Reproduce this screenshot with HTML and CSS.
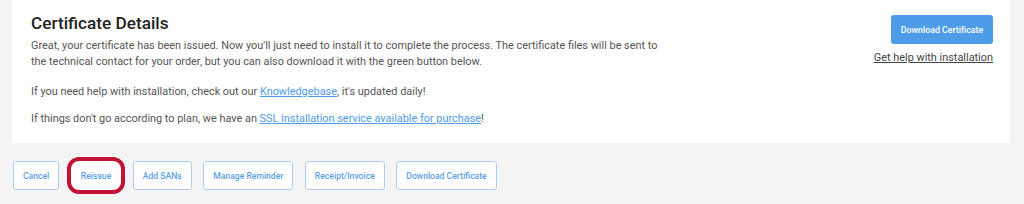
FILE: index.html
```html
<!DOCTYPE html>
<html>
<head>
<meta charset="utf-8">
<link rel="stylesheet" href="styles.css">
</head>
<body>
<div class="page">
  <section class="card">
    <div class="card-main">
      <h1 class="title">Certificate Details</h1>
      <p class="text text-lead">Great, your certificate has been issued. Now you'll just need to install it to complete the process. The certificate files will be sent to the technical contact for your order, but you can also download it with the green button below.</p>
      <p class="text">If you need help with installation, check out our <a class="link" href="#">Knowledgebase</a>, it's updated daily!</p>
      <p class="text">If things don't go according to plan, we have an <a class="link" href="#">SSL installation service available for purchase</a>!</p>
    </div>
    <div class="card-side">
      <a class="btn-primary" href="#">Download Certificate</a>
      <a class="help-link" href="#">Get help with installation</a>
    </div>
  </section>
  <div class="actions">
    <a class="btn" href="#">Cancel</a>
    <a class="btn btn-highlight" href="#">Reissue</a>
    <a class="btn" href="#">Add SANs</a>
    <a class="btn" href="#">Manage Reminder</a>
    <a class="btn" href="#">Receipt/Invoice</a>
    <a class="btn" href="#">Download Certificate</a>
  </div>
</div>
</body>
</html>
```

FILE: styles.css
```css
html, body {
  margin: 0;
  padding: 0;
  background: #f4f4f4;
}
body {
  font-family: Roboto, "Liberation Sans", sans-serif;
  width: 1024px;
  height: 204px;
  overflow: hidden;
}
.page {
  padding: 0 14px 0 12px;
}
.card {
  background: #fff;
  display: flex;
  justify-content: space-between;
  padding: 13px 17px 14px 19px;
  height: 143px;
  box-sizing: border-box;
}
.card-main {
  width: 632px;
}
.title {
  margin: 0 0 5px;
  font-size: 17.2px;
  font-weight: 500;
  color: #222;
  line-height: 20px;
}
.text {
  margin: 0 0 11px;
  font-size: 10.9px;
  line-height: 16px;
  color: #555;
}
.text-lead {
  margin-bottom: 14px;
}
.link {
  color: #4c9be8;
  text-decoration: underline;
}
.card-side {
  display: flex;
  flex-direction: column;
  align-items: flex-end;
  padding-top: 2px;
}
.btn-primary {
  display: flex;
  align-items: center;
  justify-content: center;
  width: 102px;
  height: 29px;
  background: #4d9ce8;
  border-radius: 3px;
  color: #fff;
  font-size: 8.8px;
  font-weight: 500;
  text-decoration: none;
}
.help-link {
  margin-top: 7px;
  font-size: 10.9px;
  color: #444;
  text-decoration: underline;
}
.actions {
  display: flex;
  gap: 11.5px;
  padding: 18px 0 0 1px;
}
.btn {
  display: flex;
  align-items: center;
  justify-content: center;
  height: 29px;
  box-sizing: border-box;
  padding: 0 9px;
  border: 1px solid #a9cdf3;
  border-radius: 3px;
  background: #fff;
  color: #5a9fe6;
  font-size: 8.6px;
  font-weight: 500;
  text-decoration: none;
}
.btn-highlight {
  outline: 4px solid #c41135;
  outline-offset: 0px;
  border-radius: 8px;
  border-color: #fff;
}
```
